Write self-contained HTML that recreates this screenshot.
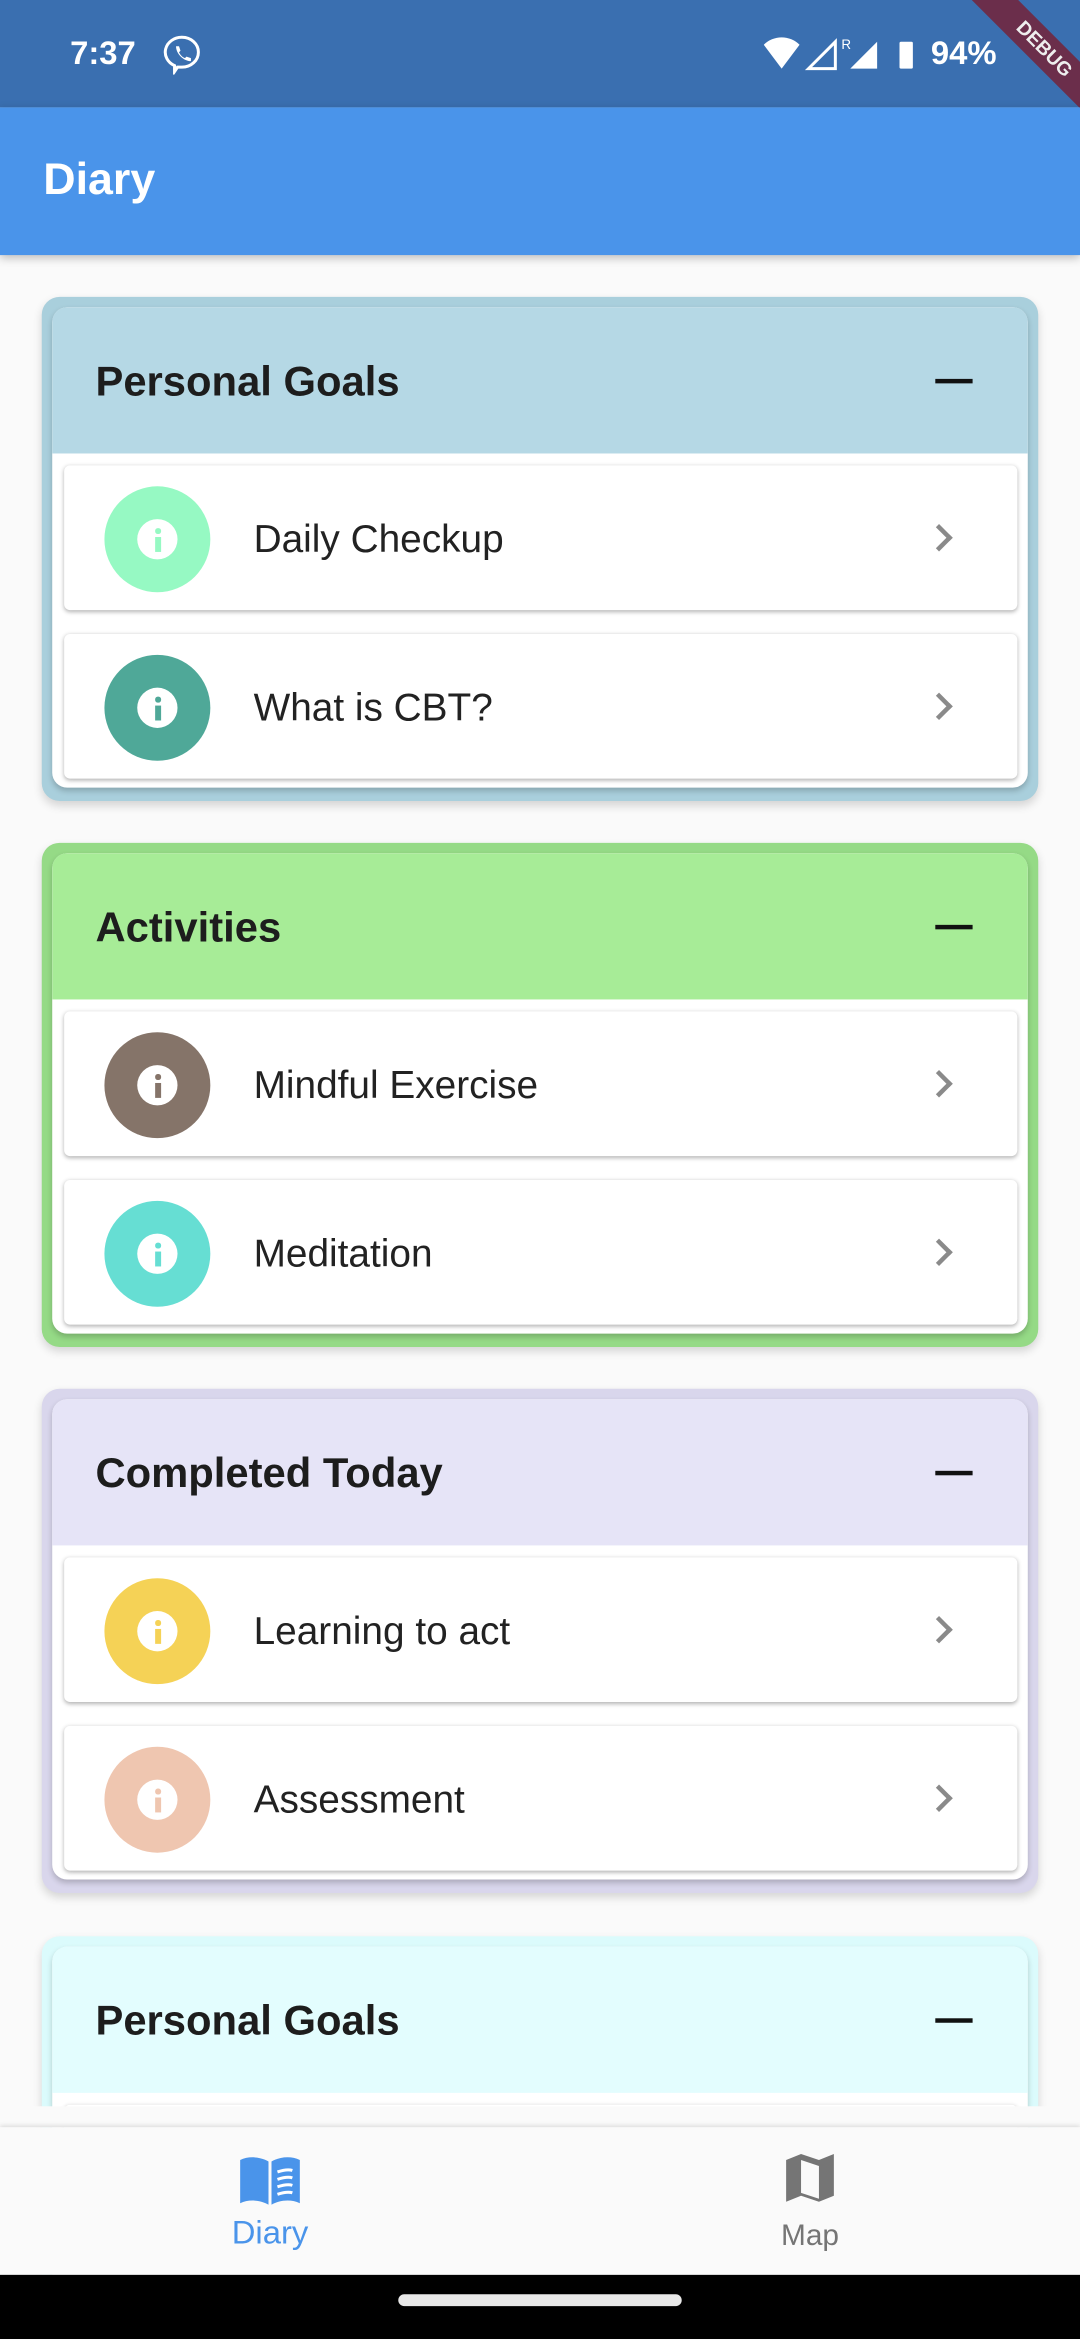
<!DOCTYPE html>
<html><head><meta charset="utf-8"><style>
*{margin:0;padding:0;box-sizing:border-box}
html,body{width:1080px;height:2340px;overflow:hidden;background:#fafafa;font-family:"Liberation Sans",sans-serif}
#w{width:724px;height:1568px;transform:scale(1.49171);transform-origin:0 0;position:relative;background:#fafafa;overflow:hidden}
.sb{position:absolute;left:0;top:0;width:724px;height:72px;background:#3a6fb0;color:#fff}
.ab{position:absolute;left:0;top:72px;width:724px;height:99px;background:#4a94ea;box-shadow:0 2px 6px rgba(0,0,0,.25)}
.ab span{position:absolute;left:29px;top:32px;font-size:30px;color:#fff;font-weight:bold}
.card{position:absolute;left:28px;width:668px;height:338px;border-radius:12px;box-shadow:0 3px 6px rgba(0,0,0,.15)}
.inner{position:absolute;left:7px;top:7px;right:7px;bottom:9px;background:#fff;border-radius:10px;overflow:hidden;box-shadow:0 2px 4px rgba(0,0,0,.2)}
.hd{height:98px;position:relative}
.hd b{position:absolute;left:29px;top:34px;font-size:28px;color:#1d1d1d}
.hd i{position:absolute;left:592px;top:48px;width:25px;height:3px;background:#111}
.it{position:absolute;left:8px;width:639px;height:97px;background:#fff;border-radius:4px;box-shadow:0 1px 3px rgba(0,0,0,.3)}
.c{position:absolute;left:27px;top:14px;width:71px;height:71px;border-radius:50%}
.c:after{content:"";position:absolute;left:22px;top:22px;width:27px;height:27px;border-radius:50%;background:#fff}
.c s{position:absolute;left:34px;top:34px;width:3.5px;height:10px;z-index:2;background:currentColor;text-decoration:none}
.c u{position:absolute;left:34px;top:28px;width:3.5px;height:3.5px;z-index:2;background:currentColor;border-radius:50%}
.t{position:absolute;left:127px;top:34px;font-size:26px;color:#222}
.ch{position:absolute;left:580px;top:42px;width:13px;height:13px;border-right:3px solid #8a8a8a;border-top:3px solid #8a8a8a;transform:rotate(45deg)}
</style></head><body><div id="w">
<div class="sb">
<span style="position:absolute;left:47px;top:23px;font-size:22px;font-weight:bold">7:37</span>
<svg style="position:absolute;left:108px;top:22px" width="28" height="28" viewBox="0 0 28 28"><path d="M14 3a11 10 0 0 1 0 20h-3l-2 3v-4A11 10 0 0 1 14 3z" fill="none" stroke="#fff" stroke-width="2"/><path d="M10 9l2 0 1 3-1 1c1 2 2 3 4 4l1-1 3 1v2c-5 0-10-5-10-10z" fill="#fff"/></svg>
<svg style="position:absolute;left:512px;top:24px" width="100" height="24" viewBox="0 0 100 24"><path d="M0 6a17 17 0 0 1 24 0L12 22z" fill="#fff"/><path d="M30 22L48 4v18z" fill="none" stroke="#fff" stroke-width="2"/><text x="52" y="9" font-size="9" fill="#fff" font-family="Liberation Sans">R</text><path d="M58 22L76 4v18z" fill="#fff"/><rect x="91" y="4" width="9" height="18" rx="1" fill="#fff"/></svg>
<span style="position:absolute;left:624px;top:23px;font-size:22px;font-weight:bold">94%</span>
<div style="position:absolute;left:630px;top:22px;width:140px;height:22px;background:rgba(120,30,50,.8);transform:rotate(45deg);color:#eee;font-size:13px;font-weight:bold;text-align:center;line-height:22px">DEBUG</div>
</div>
<div class="ab"><span>Diary</span></div>

<div class="card" style="top:199px;background:#a9cfdc">
<div class="inner"><div class="hd" style="background:#b5d8e5"><b>Personal Goals</b><i></i></div>
<div class="it" style="top:106px"><div class="c" style="background:#96f9c3;color:#96f9c3"><u></u><s></s></div><div class="t">Daily Checkup</div><div class="ch"></div></div>
<div class="it" style="top:219px"><div class="c" style="background:#4fa898;color:#4fa898"><u></u><s></s></div><div class="t">What is CBT?</div><div class="ch"></div></div>
</div></div>

<div class="card" style="top:565px;background:#95da86">
<div class="inner"><div class="hd" style="background:#a7ec97"><b>Activities</b><i></i></div>
<div class="it" style="top:106px"><div class="c" style="background:#857469;color:#857469"><u></u><s></s></div><div class="t">Mindful Exercise</div><div class="ch"></div></div>
<div class="it" style="top:219px"><div class="c" style="background:#66ded3;color:#66ded3"><u></u><s></s></div><div class="t">Meditation</div><div class="ch"></div></div>
</div></div>

<div class="card" style="top:931px;background:#d9d6ec">
<div class="inner"><div class="hd" style="background:#e6e4f7"><b>Completed Today</b><i></i></div>
<div class="it" style="top:106px"><div class="c" style="background:#f5d256;color:#f5d256"><u></u><s></s></div><div class="t">Learning to act</div><div class="ch"></div></div>
<div class="it" style="top:219px"><div class="c" style="background:#efc6b0;color:#efc6b0"><u></u><s></s></div><div class="t">Assessment</div><div class="ch"></div></div>
</div></div>

<div class="card" style="top:1298px;background:#dbfbfc">
<div class="inner"><div class="hd" style="background:#e3fdfe"><b>Personal Goals</b><i></i></div>
<div class="it" style="top:106px"></div>
</div></div>

<div style="position:absolute;left:0;top:1412px;width:724px;height:14px;background:#fafafa"></div>
<div style="position:absolute;left:0;top:1426px;width:724px;height:99px;background:#fafafa;box-shadow:0 -1px 3px rgba(0,0,0,.12)">
<svg style="position:absolute;left:160px;top:20px" width="42" height="32" viewBox="0 0 42 32"><path d="M1 2c6-3 14-2 19 1v29c-5-3-13-4-19-1z" fill="#4a94ea"/><path d="M22 3c5-3 13-4 19-1v29c-6-3-14-2-19 1z" fill="#4a94ea"/><path d="M26 10c3-1 7-2 10-1M26 15c3-1 7-2 10-1M26 20c3-1 7-2 10-1M26 25c3-1 7-2 10-1" stroke="#fff" stroke-width="2" fill="none"/></svg>
<div style="position:absolute;left:0;width:362px;top:58px;text-align:center;font-size:22px;color:#4a94ea">Diary</div>
<svg style="position:absolute;left:525px;top:18px" width="36" height="34" viewBox="0 0 36 34"><path d="M2 4l10-4 12 4 10-4v28l-10 4-12-4-10 4z" fill="#757575"/><path d="M12 4v22l12 4V8z" fill="#fafafa"/></svg>
<div style="position:absolute;left:362px;width:362px;top:62px;text-align:center;font-size:20px;color:#757575">Map</div>
</div>
<div style="position:absolute;left:0;top:1525px;width:724px;height:43px;background:#000"><div style="position:absolute;left:267px;top:13px;width:190px;height:8px;border-radius:4px;background:#e8e8e8"></div></div>
</div></body></html>
